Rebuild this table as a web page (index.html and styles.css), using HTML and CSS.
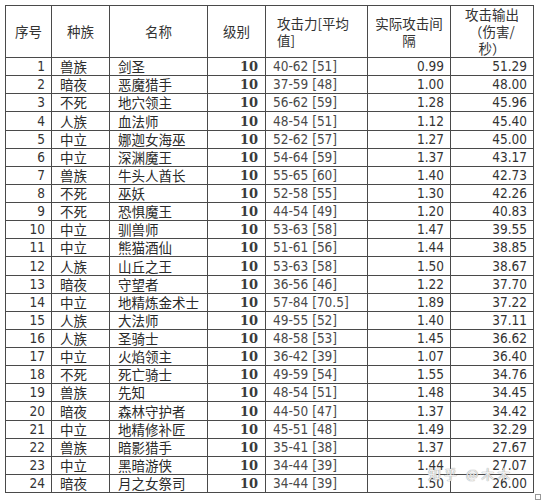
FILE: index.html
```html
<!DOCTYPE html>
<html lang="zh">
<head>
<meta charset="utf-8">
<link rel="stylesheet" href="styles.css">
</head>
<body>
<div class="sheet">
<table class="grid">
<colgroup>
<col class="c-no"><col class="c-race"><col class="c-name"><col class="c-lv"><col class="c-atk"><col class="c-int"><col class="c-dps">
</colgroup>
<thead>
<tr class="head">
<th>序号</th><th>种族</th><th>名称</th><th>级别</th><th class="h-atk">攻击力[平均值]</th><th class="h-int">实际攻击间隔</th><th class="h-dps">攻击输出（伤害/秒）</th>
</tr>
</thead>
<tbody>
<tr><td class="no">1</td><td class="cn">兽族</td><td class="cn">剑圣</td><td class="lv">10</td><td class="atk">40-62 [51]</td><td class="num">0.99</td><td class="num">51.29</td></tr>
<tr><td class="no">2</td><td class="cn">暗夜</td><td class="cn">恶魔猎手</td><td class="lv">10</td><td class="atk">37-59 [48]</td><td class="num">1.00</td><td class="num">48.00</td></tr>
<tr><td class="no">3</td><td class="cn">不死</td><td class="cn">地穴领主</td><td class="lv">10</td><td class="atk">56-62 [59]</td><td class="num">1.28</td><td class="num">45.96</td></tr>
<tr><td class="no">4</td><td class="cn">人族</td><td class="cn">血法师</td><td class="lv">10</td><td class="atk">48-54 [51]</td><td class="num">1.12</td><td class="num">45.40</td></tr>
<tr><td class="no">5</td><td class="cn">中立</td><td class="cn">娜迦女海巫</td><td class="lv">10</td><td class="atk">52-62 [57]</td><td class="num">1.27</td><td class="num">45.00</td></tr>
<tr><td class="no">6</td><td class="cn">中立</td><td class="cn">深渊魔王</td><td class="lv">10</td><td class="atk">54-64 [59]</td><td class="num">1.37</td><td class="num">43.17</td></tr>
<tr><td class="no">7</td><td class="cn">兽族</td><td class="cn">牛头人酋长</td><td class="lv">10</td><td class="atk">55-65 [60]</td><td class="num">1.40</td><td class="num">42.73</td></tr>
<tr><td class="no">8</td><td class="cn">不死</td><td class="cn">巫妖</td><td class="lv">10</td><td class="atk">52-58 [55]</td><td class="num">1.30</td><td class="num">42.26</td></tr>
<tr><td class="no">9</td><td class="cn">不死</td><td class="cn">恐惧魔王</td><td class="lv">10</td><td class="atk">44-54 [49]</td><td class="num">1.20</td><td class="num">40.83</td></tr>
<tr><td class="no">10</td><td class="cn">中立</td><td class="cn">驯兽师</td><td class="lv">10</td><td class="atk">53-63 [58]</td><td class="num">1.47</td><td class="num">39.55</td></tr>
<tr><td class="no">11</td><td class="cn">中立</td><td class="cn">熊猫酒仙</td><td class="lv">10</td><td class="atk">51-61 [56]</td><td class="num">1.44</td><td class="num">38.85</td></tr>
<tr><td class="no">12</td><td class="cn">人族</td><td class="cn">山丘之王</td><td class="lv">10</td><td class="atk">53-63 [58]</td><td class="num">1.50</td><td class="num">38.67</td></tr>
<tr><td class="no">13</td><td class="cn">暗夜</td><td class="cn">守望者</td><td class="lv">10</td><td class="atk">36-56 [46]</td><td class="num">1.22</td><td class="num">37.70</td></tr>
<tr><td class="no">14</td><td class="cn">中立</td><td class="cn">地精炼金术士</td><td class="lv">10</td><td class="atk">57-84 [70.5]</td><td class="num">1.89</td><td class="num">37.22</td></tr>
<tr><td class="no">15</td><td class="cn">人族</td><td class="cn">大法师</td><td class="lv">10</td><td class="atk">49-55 [52]</td><td class="num">1.40</td><td class="num">37.11</td></tr>
<tr><td class="no">16</td><td class="cn">人族</td><td class="cn">圣骑士</td><td class="lv">10</td><td class="atk">48-58 [53]</td><td class="num">1.45</td><td class="num">36.62</td></tr>
<tr><td class="no">17</td><td class="cn">中立</td><td class="cn">火焰领主</td><td class="lv">10</td><td class="atk">36-42 [39]</td><td class="num">1.07</td><td class="num">36.40</td></tr>
<tr><td class="no">18</td><td class="cn">不死</td><td class="cn">死亡骑士</td><td class="lv">10</td><td class="atk">49-59 [54]</td><td class="num">1.55</td><td class="num">34.76</td></tr>
<tr><td class="no">19</td><td class="cn">兽族</td><td class="cn">先知</td><td class="lv">10</td><td class="atk">48-54 [51]</td><td class="num">1.48</td><td class="num">34.45</td></tr>
<tr><td class="no">20</td><td class="cn">暗夜</td><td class="cn">森林守护者</td><td class="lv">10</td><td class="atk">44-50 [47]</td><td class="num">1.37</td><td class="num">34.42</td></tr>
<tr><td class="no">21</td><td class="cn">中立</td><td class="cn">地精修补匠</td><td class="lv">10</td><td class="atk">45-51 [48]</td><td class="num">1.49</td><td class="num">32.29</td></tr>
<tr><td class="no">22</td><td class="cn">兽族</td><td class="cn">暗影猎手</td><td class="lv">10</td><td class="atk">35-41 [38]</td><td class="num">1.37</td><td class="num">27.67</td></tr>
<tr><td class="no">23</td><td class="cn">中立</td><td class="cn">黑暗游侠</td><td class="lv">10</td><td class="atk">34-44 [39]</td><td class="num">1.44</td><td class="num">27.07</td></tr>
<tr><td class="no">24</td><td class="cn">暗夜</td><td class="cn">月之女祭司</td><td class="lv">10</td><td class="atk">34-44 [39]</td><td class="num">1.50</td><td class="num">26.00</td></tr>
</tbody>
</table>
<div class="watermark">知乎 @木木</div>
<div class="handle"></div>
</div>
</body>
</html>
```
FILE: styles.css
```css
html, body {
  margin: 0;
  padding: 0;
  background: #ffffff;
}
body {
  width: 541px;
  height: 500px;
  overflow: hidden;
}
.sheet {
  position: relative;
  padding: 5px 0 0 5px;
  border-left: 2px solid #e4e4e4;
  margin-left: -2px;
}
.grid {
  border-collapse: collapse;
  table-layout: fixed;
  width: 529px;
  color: #2a2a2a;
  font-family: "Noto Sans CJK SC", sans-serif;
  font-size: 13.5px;
}
.c-no { width: 46px; }
.c-race { width: 58px; }
.c-name { width: 98px; }
.c-lv { width: 58px; }
.c-atk { width: 102px; }
.c-int { width: 83px; }
.c-dps { width: 83px; }
.grid th, .grid td {
  border: 1px solid #4a4a4a;
  padding: 0;
  overflow: hidden;
  white-space: nowrap;
}
.head th {
  height: 51px;
  font-weight: normal;
  line-height: 16.7px;
  text-align: center;
  vertical-align: middle;
  white-space: normal;
  color: #333;
}
.head .h-atk {
  text-align: left;
  padding: 0 14px 0 11px;
}
.head .h-int {
  padding: 0 6px;
}
.head .h-dps {
  padding: 0 8px;
}
.grid td {
  height: 17.125px;
  line-height: 17px;
  vertical-align: bottom;
}
.no, .num {
  text-align: right;
  padding-right: 6px !important;
  font-family: "DejaVu Sans Condensed", "DejaVu Sans", sans-serif;
  font-stretch: condensed;
  font-size: 13.5px;
  color: #333;
}
.cn {
  padding-left: 8px !important;
  color: #2a2a2a;
}
.lv {
  text-align: right;
  padding-right: 7px !important;
  font-family: "DejaVu Serif", serif;
  font-weight: bold;
  font-size: 13px;
  color: #3a3a3a;
}
.atk {
  padding-left: 7px !important;
  font-family: "DejaVu Sans Condensed", "DejaVu Sans", sans-serif;
  font-stretch: condensed;
  font-size: 13.5px;
  color: #4a4a4a;
}
.watermark {
  position: absolute;
  left: 428px;
  top: 464px;
  font-family: "Noto Sans CJK SC", sans-serif;
  font-size: 13px;
  letter-spacing: 3px;
  color: rgba(255, 255, 255, 0.85);
  text-shadow: 0 0 1px #9a9a9a, 0 0 1px #9a9a9a;
}
.handle {
  position: absolute;
  left: 535px;
  top: 494px;
  width: 4px;
  height: 4px;
  border: 1px solid #999;
  background: #fff;
}
```
